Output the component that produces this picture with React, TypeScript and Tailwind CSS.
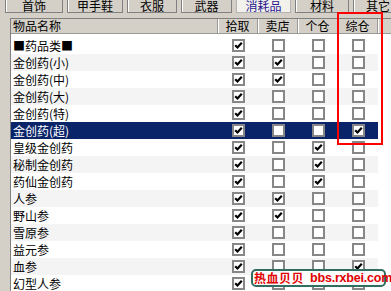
const TABS = [
  { label: '首饰', w: 58 },
  { label: '甲手鞋', w: 56 },
  { label: '衣服', w: 50 },
  { label: '武器', w: 51 },
  { label: '消耗品', w: 55, active: true },
  { label: '材料', w: 54 },
  { label: '其它', w: 50 },
];

// [name, 拾取, 卖店, 个仓, 综仓]
const ITEMS: [string, number, number, number, number][] = [
  ['■药品类■', 1, 0, 0, 0],
  ['金创药(小)', 1, 1, 0, 0],
  ['金创药(中)', 1, 1, 0, 0],
  ['金创药(大)', 1, 0, 0, 0],
  ['金创药(特)', 1, 0, 0, 0],
  ['金创药(超)', 1, 0, 0, 1],
  ['皇级金创药', 1, 0, 1, 0],
  ['秘制金创药', 1, 0, 1, 0],
  ['药仙金创药', 1, 0, 1, 0],
  ['人参', 1, 1, 0, 0],
  ['野山参', 1, 1, 0, 0],
  ['雪原参', 1, 0, 0, 0],
  ['益元参', 1, 0, 0, 0],
  ['血参', 1, 0, 0, 1],
  ['幻型人参', 1, 0, 0, 0],
];

const SELECTED = 5;

function CheckBox({ on }: { on: boolean }) {
  return (
    <span className="w-[13px] h-[13px] border-2 border-[#878787] bg-white flex items-center justify-center">
      {on && (
        <svg width="9" height="9" viewBox="0 0 9 9">
          <path d="M1.2 4.2 L3.5 6.5 L7.8 1.8" stroke="#000" strokeWidth="2.2" fill="none" />
        </svg>
      )}
    </span>
  );
}

export default function App() {
  return (
    <div
      className="relative w-[391px] h-[291px] overflow-hidden bg-[#d4d0c8] text-[12px] text-black"
      style={{ fontFamily: '"Noto Sans CJK SC", "Liberation Sans", sans-serif' }}
    >
      {/* Tabs */}
      <div className="flex gap-[4px] pl-[5px] h-[13px]">
        {TABS.map((t) => (
          <div
            key={t.label}
            style={{ width: t.w }}
            className={`h-[13px] shrink-0 flex items-center justify-center border border-t-0 leading-[12px] ${
              t.active
                ? 'bg-[#f2f1ec] border-[#b4b4b4] text-[#2a168f]'
                : 'bg-[#d4d0c8] border-[#808080] shadow-[inset_1px_0_0_#fff]'
            }`}
          >
            {t.label}
          </div>
        ))}
      </div>

      <div className="h-[5px]" />

      {/* List */}
      <div className="ml-[10px] border-l border-t border-[#808080] bg-white h-[273px]">
        {/* Header */}
        <div className="flex h-[15px] bg-[#d4d0c8] border-b border-[#9a9a9a] leading-[14px]">
          <div className="w-[207px] pl-[2px] border-r border-[#9a9a9a]">物品名称</div>
          {['拾取', '卖店', '个仓', '综仓'].map((h) => (
            <div
              key={h}
              className="w-[40px] text-center border-r border-[#9a9a9a] shadow-[inset_1px_0_0_#fff]"
            >
              {h}
            </div>
          ))}
          <div className="flex-1 shadow-[inset_1px_0_0_#fff]" />
        </div>

        {/* Rows */}
        <div className="pt-[3px]">
          {ITEMS.map(([name, a, b, c, d], i) => {
            const sel = i === SELECTED;
            const bg = sel ? 'bg-[#0a246a] text-white' : i % 2 === 1 ? 'bg-[#f4f4f4]' : 'bg-white';
            return (
              <div key={name} className={`flex w-[367px] h-[17px] items-center ${bg}`}>
                <div className="w-[207px] pl-[2px] leading-[17px]">{name}</div>
                {[a, b, c, d].map((v, k) => (
                  <div key={k} className="w-[40px] flex items-center justify-center">
                    <CheckBox on={v === 1} />
                  </div>
                ))}
              </div>
            );
          })}
        </div>
      </div>

      {/* Red highlight frame */}
      <div className="absolute left-[337px] top-[12px] w-[46px] h-[133px] border-2 border-[#ff0000]" />

      {/* Watermark */}
      <div className="absolute left-[251px] top-[269px] w-[135px] h-[18px] flex items-center gap-[6px] pl-[1px] whitespace-nowrap border-2 border-[#2f6e60] rounded-[5px] bg-white/90 text-[#e00000] font-bold">
        <span className="shrink-0 text-[12px] leading-[14px] tracking-[0.5px]">热血贝贝</span>
        <span
          className="shrink-0 text-[12.5px] leading-[14px] tracking-[-0.2px]"
          style={{ fontFamily: '"Liberation Sans", sans-serif' }}
        >
          bbs.rxbei.com
        </span>
      </div>
    </div>
  );
}
